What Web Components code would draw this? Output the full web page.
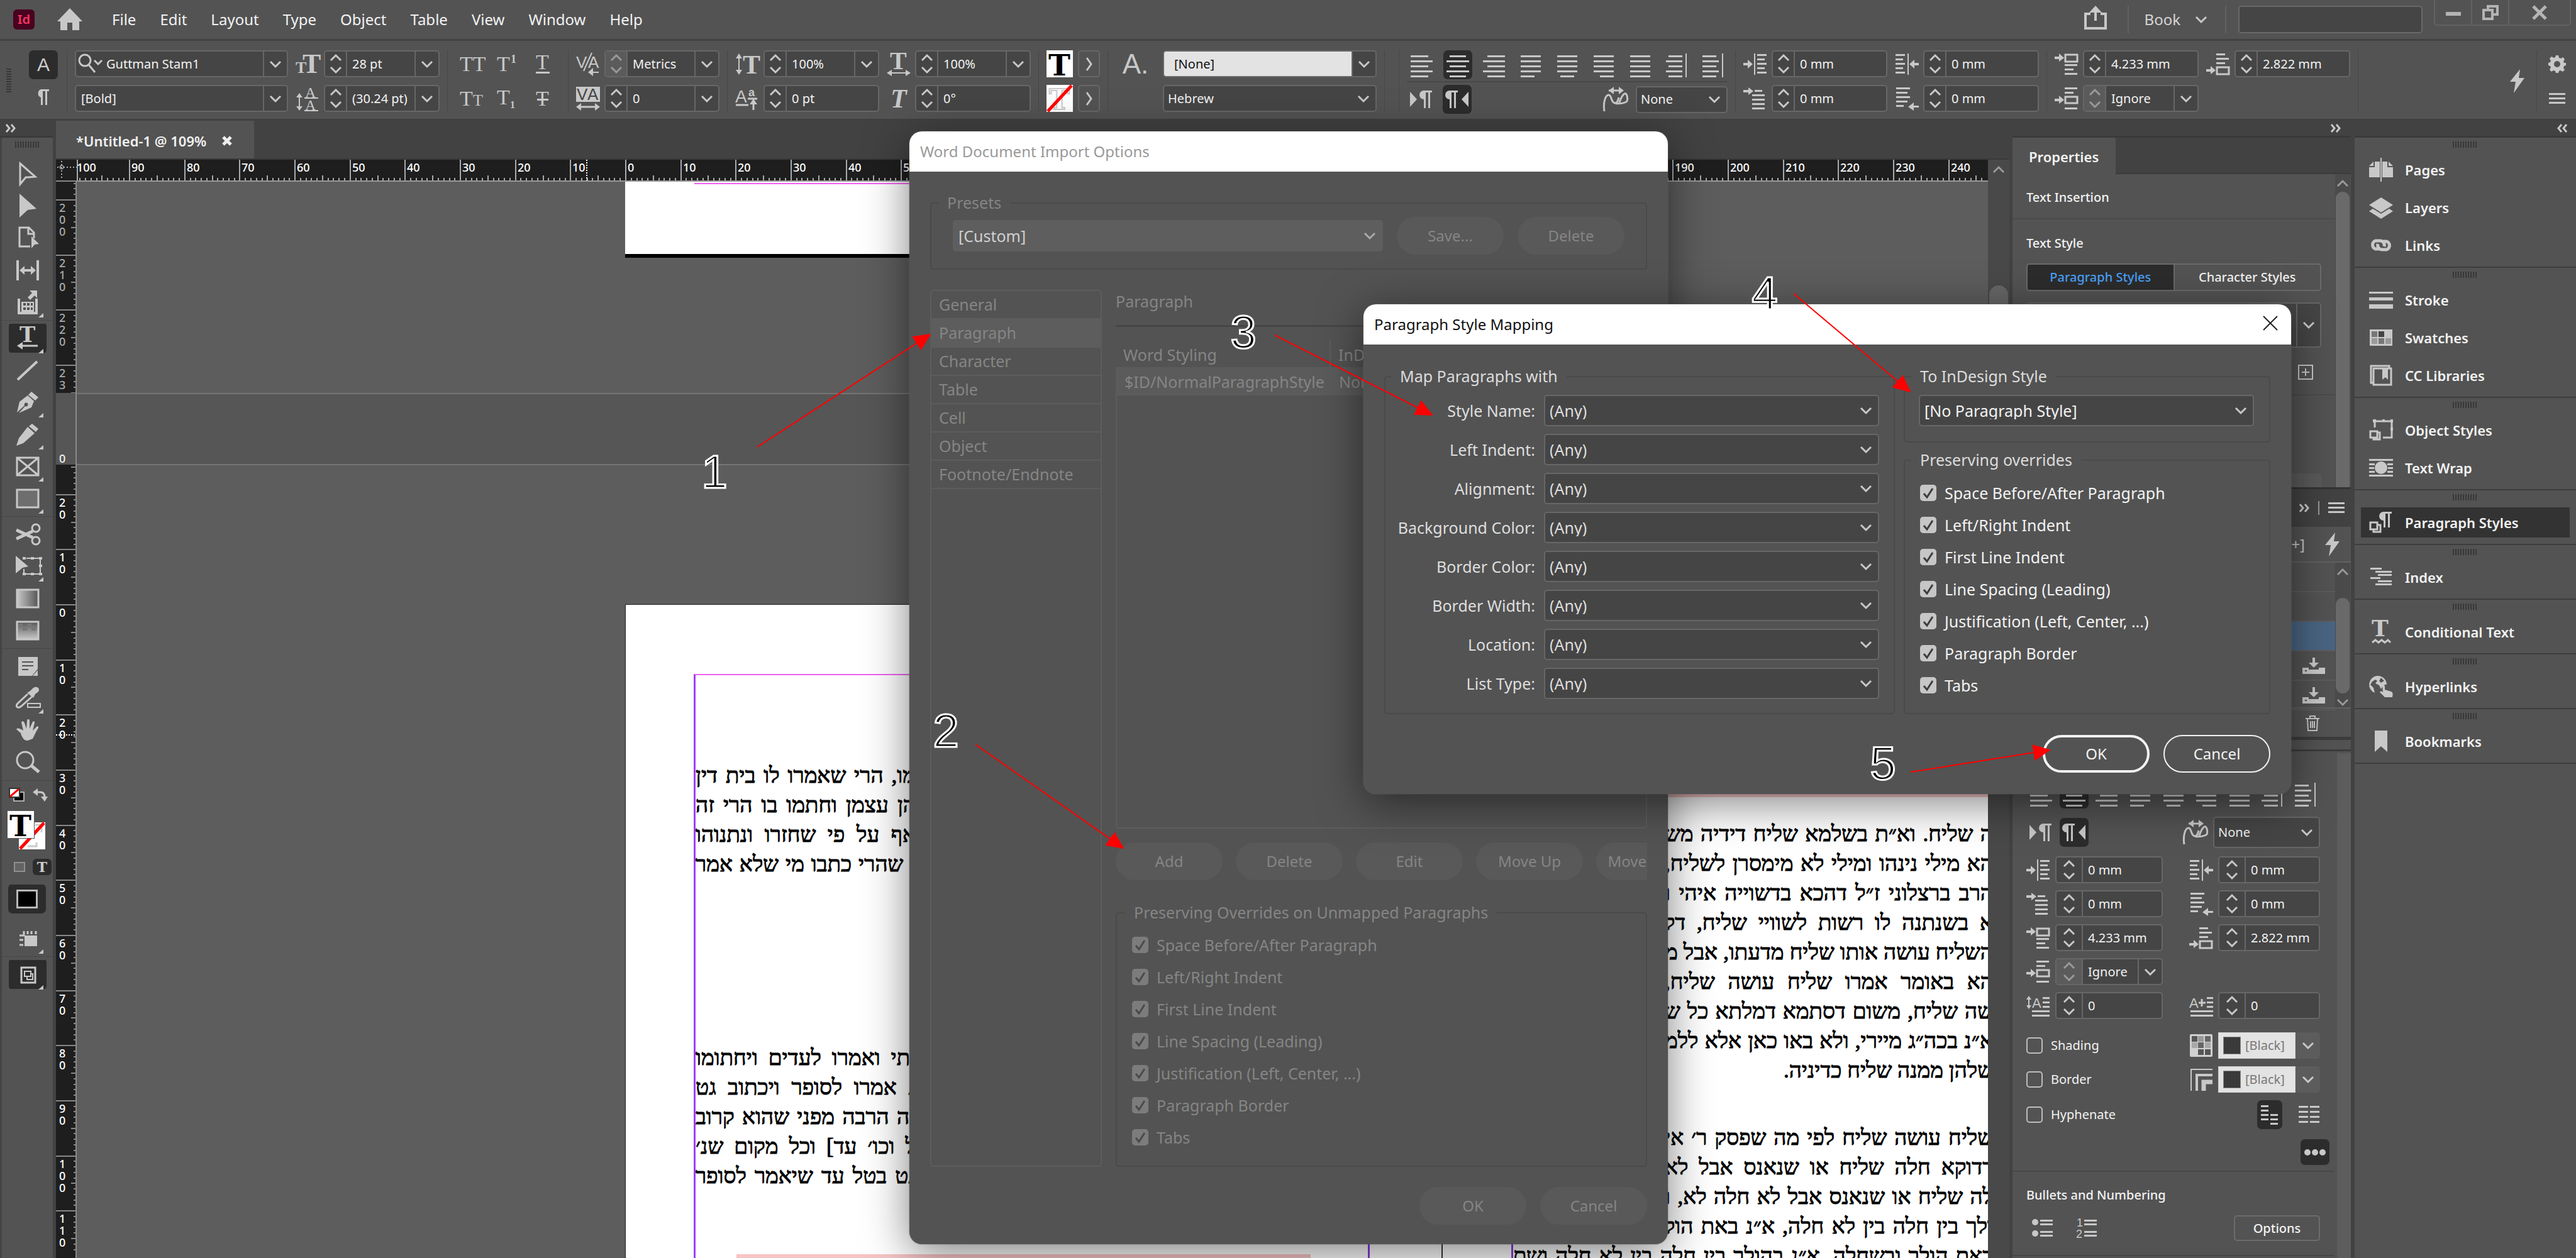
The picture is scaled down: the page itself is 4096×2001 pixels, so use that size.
<!DOCTYPE html>
<html lang="en">
<head>
<meta charset="utf-8">
<title>Layout workspace</title>
<style>
html,body{height:100%;margin:0}
body{background:#424242;overflow:hidden;font-family:"Noto Sans","Open Sans",sans-serif;font-size:20px;line-height:28px;color:#f2f2f2}
</style>
</head>
<body>
<id-app></id-app>
<script>
const chev = 'fill="none" stroke="currentColor" stroke-width="3"';
const bars = (rows, y0 = 3, step = 8) => rows.map((r, i) => `<rect x="${r[0]}" y="${y0 + i * step}" width="${r[1]}" height="3"/>`).join('');
const serif = 'font-family="Liberation Serif" ';
const corner = '<path d="M55 42v7h-8z"/>';
const ICONS = {
  down: [20, 12, `<path d="M2 2l8 8 8-8" ${chev}/>`],
  up: [20, 12, `<path d="M2 10l8-8 8 8" ${chev}/>`],
  right: [12, 28, `<path d="M2 4l7 10-7 10" ${chev}/>`],
  home: [42, 36, '<path d="M21 0L1 21h5v14h11V23h8v12h11V21h5z"/>'],
  share: [38, 40, `<path d="M11 13H3v23h32V13h-8M19 24V6" fill="none" stroke="currentColor" stroke-width="4"/><path d="M19 0l10 11H9z"/>`],
  min: [26, 26, '<rect x="1" y="12" width="24" height="6"/>'],
  restore: [30, 26, '<path d="M11 8V3h15v13h-7M4 9h14v14H4z" fill="none" stroke="currentColor" stroke-width="4"/>'],
  close: [26, 24, '<path d="M3 2l20 20M23 2L3 22" fill="none" stroke="currentColor" stroke-width="5"/>'],
  x: [26, 26, '<path d="M2 2l22 22M24 2L2 24" fill="none" stroke="currentColor" stroke-width="2"/>'],
  xs: [16, 16, '<path d="M2 2l12 12M14 2L2 14" fill="none" stroke="currentColor" stroke-width="5"/>'],
  search: [42, 36, `<circle cx="12" cy="12" r="9" fill="none" stroke="currentColor" stroke-width="3"/><path d="M18 19l10 12M27 12l6 6 6-6" ${chev}/>`],
  pil: [24, 26, '<path d="M21 0v3h-3v22h-3V3h-4v22H8V13a7 7 0 010-13z"/>'],
  ltr: [38, 32, '<path d="M1 4l11 12L1 28z"/><path d="M36 2v3h-3v25h-3V5h-4v25h-3V16a7 7 0 010-14z"/>'],
  rtl: [38, 32, '<path d="M37 4L26 16l11 12z"/><path d="M20 2v3h-3v25h-3V5h-4v25H7V16A7 7 0 017 2z"/>'],
  size: [38, 36, `<text x="0" y="32" font-weight="700" ${serif}font-size="26">T</text><text x="11" y="32" font-weight="700" ${serif}font-size="44">T</text>`],
  lead: [38, 38, `<text x="15" y="17" ${serif}font-size="24">A</text><text x="15" y="37" ${serif}font-size="24">A</text><path d="M14 18h22M14 38h22M6 14v20" fill="none" stroke="currentColor" stroke-width="2"/><path d="M6 10l5 7H1zM6 38l5-7H1z"/>`],
  caps: [44, 28, `<text x="1" y="25" ${serif}font-size="34">TT</text>`],
  small: [44, 28, `<text x="1" y="25" ${serif}font-size="34">T</text><text x="22" y="25" ${serif}font-size="26">T</text>`],
  sup: [36, 28, `<text x="1" y="25" ${serif}font-size="34">T</text><text x="23" y="12" ${serif}font-weight="700" font-size="18">1</text>`],
  sub: [36, 30, `<text x="1" y="24" ${serif}font-size="34">T</text><text x="22" y="30" ${serif}font-weight="700" font-size="16">1</text>`],
  under: [26, 32, `<text x="2" y="24" ${serif}font-size="34">T</text><rect x="2" y="28" width="22" height="3"/>`],
  strike: [26, 28, `<text x="2" y="25" ${serif}font-size="34">T</text><rect x="4" y="14" width="18" height="3"/>`],
  kern: [38, 38, `<text x="0" y="25" font-family="Liberation Sans" font-size="26">V</text><text x="19" y="25" font-family="Liberation Sans" font-size="26">A</text><path d="M12 30L25 1M24 32h12" fill="none" stroke="currentColor" stroke-width="2"/><path d="M27 25v13l-8-6z"/>`],
  track: [38, 38, `<rect width="38" height="24"/><text x="1" y="21" fill="#454545" font-family="Liberation Sans" font-size="26">V</text><text x="18" y="21" fill="#454545" font-family="Liberation Sans" font-size="26">A</text><path d="M5 32h28" stroke="currentColor" stroke-width="3"/><path d="M0 32l8-6v12zM38 32l-8-6v12z"/>`],
  vscale: [38, 34, `<path d="M6 6v22" stroke="currentColor" stroke-width="2"/><path d="M6 0l5 8H1zM6 34l5-8H1z"/><text x="12" y="32" ${serif}font-weight="700" font-size="42">T</text>`],
  hscale: [38, 38, `<text x="5" y="27" ${serif}font-weight="700" font-size="40">T</text><path d="M6 33h26" stroke="currentColor" stroke-width="2"/><path d="M0 33l8-5v10zM38 33l-8-5v10z"/>`],
  base: [38, 36, `<text x="0" y="24" font-family="Liberation Sans" font-size="28">A</text><text x="21" y="14" font-family="Liberation Sans" font-weight="700" font-size="18">a</text><path d="M1 28h20M20 18h15M29 24v12" stroke="currentColor" stroke-width="3"/><path d="M29 18l6 9H23z"/>`],
  skew: [38, 34, `<text x="6" y="31" ${serif}font-style="italic" font-weight="700" font-size="42">T</text>`],
  swT: [42, 43, `<rect width="42" height="43" fill="#fff"/><text x="3" y="40" fill="#000" font-family="DejaVu Serif" font-weight="700" font-size="47">T</text>`],
  swN: [42, 43, `<rect width="42" height="43" fill="#fff"/><text x="4" y="39" fill="#fff" stroke="#ccc" stroke-width="2" font-family="DejaVu Serif" font-weight="700" font-size="44">T</text><path d="M2 42L40 1" stroke="#f00" stroke-width="5"/>`],
  swE: [42, 43, `<rect width="42" height="43" fill="#fff"/><path d="M26 4h10v12M14 38h14v-6" fill="none" stroke="#ccc" stroke-width="3"/><path d="M2 42L40 1" stroke="#f00" stroke-width="5"/>`],
  al0: [38, 36, bars([[2,28],[2,35],[2,28],[2,35],[2,28]])],
  al1: [38, 36, bars([[6,26],[1,36],[6,26],[1,36],[6,26]])],
  al2: [38, 36, bars([[8,28],[1,35],[8,28],[1,35],[8,28]])],
  al3: [38, 36, bars([[3,32],[3,32],[3,32],[3,32],[3,22]])],
  al4: [38, 36, bars([[3,32],[3,32],[3,32],[3,32],[8,22]])],
  al5: [38, 36, bars([[3,32],[3,32],[3,32],[3,32],[13,22]])],
  al6: [38, 36, bars([[3,32],[3,32],[3,32],[3,32],[3,32]])],
  al7: [38, 36, bars([[6,22],[2,26],[6,22],[2,26],[6,22]]) + '<rect x="33" width="2" height="38"/>'],
  al8: [38, 36, bars([[2,22],[2,26],[2,22],[2,26],[2,22]]) + '<rect x="33" width="2" height="38"/>'],
  kash: [42, 40, '<path d="M3 39C1 27 4 13 10 13c5 0 3 12 10 13 4 0 5-5 6-9M20 26c5 2 16 0 19-3 2-6-1-14-4-12s-6 8-8 14M10 6h20" fill="none" stroke="currentColor" stroke-width="3"/><path d="M10 6l8-6v12zM34 6l-8-6v12z"/>'],
  inL: [38, 34, '<path d="M0 15h7v-5l8 7-8 7v-5H0z"/><rect x="17" width="2" height="34"/>' + bars([[22,15],[22,12],[22,15],[22,12],[22,15]], 1, 7)],
  inR: [38, 34, '<path d="M38 15h-7v-5l-8 7 8 7v-5h7z"/><rect x="20" width="2" height="34"/>' + bars([[1,15],[1,12],[1,15],[1,12],[1,15]], 1, 7)],
  inF: [38, 36, '<path d="M0 4h8V0l8 6-8 6V8H0z"/>' + bars([[18,12],[14,20],[14,20],[14,20],[14,20]], 4, 7)],
  inLast: [38, 36, bars([[2,22],[2,18],[2,22],[2,18],[2,12]], 0, 7) + '<path d="M38 29h-8v-5l-9 7 9 6v-5h8z"/>'],
  spB: [38, 34, '<path d="M0 5h7V0l8 7-8 6V9H0z"/><rect x="17" y="2" width="19" height="11" fill="none" stroke="currentColor" stroke-width="3"/>' + bars([[16,20],[16,14],[16,20]], 17, 7)],
  spA: [38, 34, '<path d="M0 25h7v-5l8 7-8 6v-4H0z"/><rect x="17" y="22" width="19" height="11" fill="none" stroke="currentColor" stroke-width="3"/>' + bars([[16,14],[16,20],[16,14]], 0, 7)],
  spM: [38, 36, '<path d="M0 18h7v-5l8 7-8 6v-4H0z"/><rect x="17" y="15" width="19" height="10" fill="none" stroke="currentColor" stroke-width="3"/>' + bars([[16,20],[16,14]], 0, 7) + '<rect x="16" y="32" width="20" height="3"/>'],
  dropH: [38, 32, `<path d="M4 2v17" stroke="currentColor" stroke-width="2"/><path d="M4 0l4 6H0zM4 21l4-6H0z"/><text x="9" y="19" font-family="Liberation Sans" font-size="22">A</text>${bars([[26,11],[26,11],[26,11]],2,7)}${bars([[9,28],[9,28]],23,7)}`],
  dropC: [38, 32, `<text x="0" y="19" font-family="Liberation Sans" font-size="22">A</text><path d="M15 11h11M20 5v12" stroke="currentColor" stroke-width="3"/>${bars([[28,10],[28,10],[28,10]],2,7)}${bars([[2,36],[2,36]],23,7)}`],
  grid: [36, 36, '<rect width="36" height="36" rx="2" fill="#d0d0d0"/><path d="M3 3h9v9H3z" fill="#555"/><path d="M13 3h9v9h-9z" fill="#999"/><path d="M24 3h9v9h-9zM13 13h9v9h-9z" fill="#666"/><path d="M3 13h9v9H3zM24 13h9v9h-9z" fill="#a8a8a8"/><path d="M13 24h9v9h-9zM24 24h9v9h-9z" fill="#555"/>'],
  bord: [36, 36, '<path d="M2 36V2h34" fill="none" stroke="currentColor" stroke-width="2"/><path d="M11 36V11h25" fill="none" stroke="currentColor" stroke-width="4"/><path d="M22 36V22h14" fill="none" stroke="currentColor" stroke-width="7"/>'],
  bolt: [26, 38, '<path d="M18 0L2 20h9L8 38l17-24h-9z"/>'],
  gear: [28, 28, '<path fill-rule="evenodd" d="M12 0h4l1 4 3 1 3-2 3 3-2 4 1 2 3 0v4l-3 1-1 3 2 3-3 3-4-2-2 1-1 3h-4l-1-3-3-1-3 2-3-3 2-4-1-2-3-1v-4l3-1 1-2-2-4 3-3 4 2 2-1zM14 9a5 5 0 100 10 5 5 0 000-10z"/>'],
  menu: [26, 20, bars([[0,26],[0,26],[0,26]], 1, 7)],
  dmore: [16, 14, '<path d="M1 1l5 6-5 6M9 1l5 6-5 6" fill="none" stroke="currentColor" stroke-width="3"/>'],
  dless: [16, 14, '<path d="M7 1L2 7l5 6M15 1l-5 6 5 6" fill="none" stroke="currentColor" stroke-width="3"/>'],
  grip: [42, 10, Array.from({length:10},(_,i)=>`<rect x="${i*4+1}" width="2" height="10" fill="#383838"/>`).join('')],
  vgrip: [8, 42, Array.from({length:10},(_,i)=>`<rect y="${i*4+1}" width="8" height="2" fill="#383838"/>`).join('')],
  t_sel: [60, 50, '<path d="M18 8l24 21-11 1-4 0-9 11z" fill="none" stroke="currentColor" stroke-width="3"/>'],
  t_dir: [60, 50, '<path d="M17 5l27 24-14 2-13 12z"/>'],
  t_page: [60, 50, '<path d="M34 38H17V8h15l8 8v9M31 8v10h10" fill="none" stroke="currentColor" stroke-width="3"/><path d="M36 22l12 12-7 1-5 6z"/>'],
  t_gap: [60, 50, '<path d="M12 9h4v32h-4zM44 9h4v32h-4zM17 25l8-7v5h10v-5l8 7-8 7v-5H25v5z"/>'],
  t_cont: [60, 50, '<path d="M16 19v23h28V19" fill="none" stroke="currentColor" stroke-width="4"/><path fill-rule="evenodd" d="M20 24h20v16H20zM23 26v4h4v-4zM29 26v4h4v-4zM35 26v4h3v-4zM23 33v4h4v-4zM29 33v4h4v-4zM35 33v4h3v-4z"/><path d="M33 6h12v12l-4-4-7 7-4-4 7-7z"/>' + corner],
  t_type: [60, 50, `<text x="17" y="31" font-family="DejaVu Serif" font-weight="700" font-size="34">T</text><path d="M46 37H20" stroke="currentColor" stroke-width="3"/><path d="M22 31v12l-9-6z"/>` + corner],
  t_line: [60, 50, '<path d="M14 40L45 11" stroke="currentColor" stroke-width="4"/>'],
  t_pen: [60, 50, '<path d="M36 8l11 9-5 5-11-9zM30 14l10 9-4 10-20 9 10-11a3 3 0 10-1-1L13 41l4-17z"/>' + corner],
  t_pencil: [60, 50, '<path d="M37 8l10 8-4 5-11-9zM30 13l11 10-18 16-11 4 4-12z"/>' + corner],
  t_frame: [60, 50, '<path d="M13 11h34v28H13zM13 11l34 28M47 11L13 39" fill="none" stroke="currentColor" stroke-width="3"/>' + corner],
  t_rect: [60, 50, '<rect x="13" y="11" width="34" height="28" fill="#6e6e6e" stroke="currentColor" stroke-width="3"/>' + corner],
  t_cut: [60, 50, '<path d="M12 18l26 12M12 32l26-12" stroke="currentColor" stroke-width="5"/><circle cx="43" cy="15" r="6" fill="none" stroke="currentColor" stroke-width="3"/><circle cx="43" cy="35" r="6" fill="none" stroke="currentColor" stroke-width="3"/>'],
  t_free: [60, 50, '<path d="M11 8l20 17-9 2-11 9z"/><path d="M28 12h22v25H24v-8" fill="none" stroke="currentColor" stroke-width="2"/><path d="M22 10h5v4h-5zM35 10h5v4h-5zM48 10h5v4h-5zM48 22h5v4h-5zM48 35h5v4h-5zM35 35h5v4h-5zM22 35h5v4h-5z"/>' + corner],
  t_grad: [60, 50, '<defs><linearGradient id="g"><stop stop-color="#c8c8c8"/><stop offset="1" stop-color="#555"/></linearGradient></defs><rect x="13" y="11" width="34" height="28" fill="url(#g)" stroke="currentColor" stroke-width="3"/>'],
  t_feather: [60, 50, '<defs><linearGradient id="g" x2="0" y2="1"><stop stop-color="#555"/><stop offset="1" stop-color="#c8c8c8"/></linearGradient></defs><rect x="13" y="11" width="34" height="28" fill="url(#g)" stroke="currentColor" stroke-width="3"/><path d="M15 14h7v6h-7zM29 14h7v6h-7zM22 20h7v5h-7zM36 20h7v5h-7z" fill="#777"/>'],
  t_note: [60, 50, '<path fill-rule="evenodd" d="M15 10h31v19l-9 11H15zM21 17v2h18v-2zM21 23v2h18v-2zM21 29v2h10v-2z"/><path d="M46 31v9h-8z"/>'],
  t_eye: [60, 50, '<path d="M38 9c4-4 10-2 10 2s-4 5-6 7l-3 6-10-8 5-3z"/><path d="M30 18L14 33c-4 5 0 8 5 5l18-16" fill="none" stroke="currentColor" stroke-width="3"/><rect x="30" y="33" width="20" height="6" fill="none" stroke="currentColor" stroke-width="2"/>' + corner],
  t_hand: [60, 50, '<path d="M20 30l-8-7c2-3 6-1 11 2l-3-13c1-3 4-2 5 1l3 9 1-13c1-3 4-2 4 0l0 13 5-11c2-2 4 0 3 2l-3 12 6-6c2-2 4 0 3 2-4 6-6 11-9 17l-8 3c-5 0-8-3-11-11z"/>'],
  t_zoom: [60, 50, '<circle cx="26" cy="21" r="13" fill="none" stroke="currentColor" stroke-width="3"/><path d="M36 30l12 10" stroke="currentColor" stroke-width="5"/>'],
  t_view: [60, 50, '<rect x="25" y="20" width="20" height="17"/><path d="M17 20h7v-7M17 27h6M17 35h6M30 13v5M36 13v5M43 13v5" fill="none" stroke="currentColor" stroke-width="3"/>' + corner],
  t_screen: [60, 50, '<path d="M20 14h22v24H20z" fill="none" stroke="currentColor" stroke-width="3"/><path d="M25 20h10v8H25zM29 28v5h9v-9h-3" fill="none" stroke="currentColor" stroke-width="2"/>' + corner],
  mini: [26, 26, '<rect x="8" y="8" width="16" height="14" fill="#000" stroke="#b0b0b0" stroke-width="2"/><rect x="1" y="2" width="16" height="14" fill="#fff" stroke="#333" stroke-width="2"/><path d="M2 15L16 3" stroke="#f00" stroke-width="3"/>'],
  swap: [24, 24, '<path d="M6 8h6q7 0 7 8" fill="none" stroke="currentColor" stroke-width="3"/><path d="M8 2v12L0 8zM13 15h11l-5 8z"/>'],
  pages: [38, 38, '<path d="M0 15h9V6h8v25H0zM38 15h-9V6h-8v25h17zM0 13l7-7v7zM38 13l-7-7v7zM18 0h2v38h-2z"/>'],
  layers: [38, 38, '<path d="M19 3l19 12-19 12L0 15zM6 21l13 8 13-8 6 4-19 12L0 25z"/>'],
  links: [42, 22, '<path d="M18 17h-6a7 7 0 010-13h8a7 7 0 016 9M24 5h6a7 7 0 010 13h-8a7 7 0 01-6-9" fill="none" stroke="currentColor" stroke-width="5"/>'],
  stroke: [38, 28, '<path d="M0 1h38v3H0zM0 10h38v5H0zM0 21h38v7H0z"/>'],
  swatches: [36, 26, '<rect width="36" height="26"/><path d="M3 3h9v9H3zM14 14h9v9h-9z" fill="#777"/><path d="M3 14h9v9H3zM25 14h9v9h-9z" fill="#999"/><path d="M14 3h9v9h-9z" fill="#444"/>'],
  cc: [36, 34, '<path d="M5 29H2V2h29v3M6 6h28v26H6z" fill="none" stroke="currentColor" stroke-width="3"/><path d="M20 7h9v17l-4-4-5 4z"/>'],
  obj: [38, 34, '<path d="M9 13V3h27v26H22" fill="none" stroke="currentColor" stroke-width="3"/><path d="M2 19h11v10H2zM13 21h4v11H7v-3" fill="none" stroke="currentColor" stroke-width="3"/><path d="M6 0h5v5H6zM21 0h4v4h-4zM34 0h4v5h-4zM34 13h4v5h-4z"/>'],
  wrap: [38, 28, bars([[0,38],[0,38]],0,25) + bars([[0,9],[0,8],[0,9]],7,6) + bars([[29,9],[30,8],[29,9]],7,6) + '<circle cx="19" cy="14" r="10"/>'],
  pstyle: [38, 36, '<path d="M36 1v3h-3v22h-3V4h-4v22h-3V15a7 7 0 010-14z"/><path d="M2 18h11v11H2zM13 22h5v11H7v-4" fill="none" stroke="currentColor" stroke-width="3"/>'],
  index: [34, 30, bars([[0,18],[8,26],[12,22],[0,16],[12,22],[8,26]], 0, 5)],
  cond: [34, 38, `<text x="2" y="26" font-family="DejaVu Serif" font-weight="700" font-size="36">T</text><path d="M3 36l5-4 5 4 5-4 5 4 5-4 4 4" fill="none" stroke="currentColor" stroke-width="3"/>`],
  hyper: [40, 36, '<path fill-rule="evenodd" d="M14 1a14 14 0 00-4 27l-2-8-5-5 3-5 5-3 3 2-3 4 6 3 3 6 4-7h5A14 14 0 0014 1zM20 4l5 5-5 3-3-3z"/><path d="M22 15c2-1 4 0 4 3v5l10 3c3 1 3 4 2 9H26l-8-8c1-2 3-2 5 0z"/>'],
  book: [24, 36, '<path d="M2 1h20v34l-10-9-10 9z"/>'],
  plus: [26, 26, '<path d="M2 2h22v22H2zM13 7v12M7 13h12" fill="none" stroke="currentColor" stroke-width="2"/>'],
  save: [36, 26, '<path fill-rule="evenodd" d="M0 16h10v3h16v-3h10v10H0zM4 20v2h3v-2z"/><path d="M16 0h4v8h6l-8 8-8-8h6z"/>'],
  trash: [24, 26, '<path d="M1 6h22M8 6V2h8v4M4 7l1 18h14l1-18M9 10v11M12 10v11M15 10v11" fill="none" stroke="currentColor" stroke-width="2"/>'],
  hyA: [28, 34, bars([[0,12],[0,12],[0,12],[0,12]],2,7) + bars([[15,12],[15,12],[15,12]],16,7)],
  hyB: [34, 30, bars([[0,15],[0,15],[0,15],[0,15]],1,8) + bars([[18,15],[18,15],[18,15],[18,15]],1,8)],
  dots: [34, 12, '<circle cx="5" cy="6" r="5"/><circle cx="17" cy="6" r="5"/><circle cx="29" cy="6" r="5"/>'],
  bul: [34, 30, '<circle cx="5" cy="6" r="5"/><circle cx="5" cy="24" r="5"/>' + bars([[13,20],[13,20]],2,6) + bars([[13,20],[13,20]],20,6)],
  num: [34, 32, `<text x="1" y="13" font-family="Liberation Sans" font-size="18">1</text><text x="0" y="31" font-family="Liberation Sans" font-size="18">2</text>` + bars([[13,20],[13,20]],2,6) + bars([[13,20],[13,20]],20,6)],
  check: [26, 26, '<path d="M6 14l5 6 9-14" fill="none" stroke="currentColor" stroke-width="3"/>'],
};
const icon = (n, cls = '') => `<id-icon name="${n}" class="${cls}"></id-icon>`;
const BASE = `*{box-sizing:border-box}button,input,select{font:inherit;color:inherit;margin:0}button{padding:0;border:0;background:none}
.sel{display:grid;align-items:center}.sel>*{grid-area:1/1}.sel select{appearance:none;outline:0;width:100%;height:100%}.sel id-icon{justify-self:end;pointer-events:none}`;

function define(name, css, html, after) {
  customElements.define(name, class extends HTMLElement {
    connectedCallback() {
      if (this.shadowRoot) return;
      const root = this.attachShadow({ mode: 'open' });
      root.innerHTML = `<style>${BASE}${css}</style>` + (typeof html === 'function' ? html(this) : html);
      if (after) after(this, root);
    }
  });
}

define('id-icon', ':host{display:inline-flex;flex:none;color:#c8c8c8}svg{display:block;overflow:visible}', el => {
  const [w, h, body] = ICONS[el.getAttribute('name')];
  return `<svg width="${w}" height="${h}" viewBox="0 0 ${w} ${h}" fill="currentColor" aria-hidden="true">${body}</svg>`;
});

/* numeric / combo field: spin buttons, value, drop button */
define('id-field', `:host{display:flex;height:43px;border:2px solid #676767;border-radius:5px;background:#454545;overflow:hidden;min-width:0}
.spin{display:flex;flex-direction:column;width:var(--spin,35px);flex:none;border-right:2px solid #676767}
.spin button{flex:1;display:grid;place-items:center}
:host([off]) .spin{background:#5b5b5b}:host([off]) .spin id-icon{color:#999}
input{flex:1;min-width:0;width:0;border:0;background:none;outline:0;padding:0 0 0 8px}
.drop{flex:none;width:38px;border-left:2px solid #676767;display:grid;place-items:center}
:host([light]) input{background:#e3e3e3;color:#111;padding-left:16px}.lead{align-self:center;margin-left:2px}:host([lead]) input{padding-left:4px}`,
  el => {
    const a = n => el.getAttribute(n), h = n => el.hasAttribute(n);
    return (h('spin') ? `<div class="spin"><button aria-label="Increase">${icon('up')}</button><button aria-label="Decrease">${icon('down')}</button></div>` : '')
      + (h('lead') ? icon('search', 'lead') : '')
      + `<input aria-label="${a('label')}" value="${a('value') || ''}">`
      + (h('drop') ? `<button class="drop" aria-label="Show ${a('label')} list">${icon('down')}</button>` : '');
  });

define('id-select', `:host{display:block;height:43px}.sel{height:100%}select{background:#454545;border:2px solid #676767;border-radius:5px;padding:0 40px 0 6px}id-icon{margin-right:11px}
:host([big]){font-size:25px;height:50px}:host([big]) select{padding-left:7px}
:host([off]) select{background:#5e5e5e;border-color:#5e5e5e;color:#d0d0d0;opacity:1}:host([off]) id-icon{color:#aaa}`,
  el => `<div class="sel"><select aria-label="${el.getAttribute('label')}" ${el.hasAttribute('off') ? 'disabled' : ''}><option>${el.getAttribute('value')}</option></select>${icon('down')}</div>`);

define('id-check', `:host{display:flex;align-items:center;height:51px;font-size:25px}label{display:flex;align-items:center;gap:13px;white-space:nowrap}
.box{display:grid}.box>*{grid-area:1/1}input{appearance:none;width:26px;height:26px;border-radius:5px;background:#c6c6c6}id-icon{color:#3c3c3c;pointer-events:none}
:host([off]){color:#858585}:host([off]) input{background:#7c7c7c}:host([off]) id-icon{color:#4a4a4a}
:host([small]){font-size:20px}:host([small]) input{background:none;border:2px solid #bdbdbd}`,
  el => `<label><span class="box"><input type="checkbox" ${el.hasAttribute('small') ? '' : 'checked'} ${el.hasAttribute('off') ? 'disabled' : ''}>${el.hasAttribute('small') ? '' : icon('check')}</span><slot></slot></label>`);

define('id-pill', `:host{display:block;flex:none;width:170px;height:60px}button{width:100%;height:100%;border-radius:30px;border:2px solid #f2f2f2;font-size:24px;white-space:nowrap}
:host([primary]) button{border-width:4px}:host([off]) button{border-color:#595959;background:#595959;color:#858585}`,
  el => `<button ${el.hasAttribute('off') ? 'disabled' : ''}><slot></slot></button>`);

define('id-group', `:host{display:block}fieldset{margin:0;min-width:0;border:2px solid #4a4a4a;border-radius:5px;padding:var(--pad)}
legend{height:30px;line-height:28px;font-size:25px;padding:0 14px;margin-left:var(--lm,11px);color:#dcdcdc}:host([off]) legend{color:#858585}`,
  el => `<fieldset><legend>${el.getAttribute('title-text')}</legend><slot></slot></fieldset>`);

define('id-window', `:host{display:flex;flex-direction:column;position:absolute;border-radius:20px;background:#535353;overflow:hidden;box-shadow:0 14px 70px rgba(0,0,0,.5),0 0 2px #888}
header{height:64px;flex:none;background:#fff;color:#111;font-size:24px;display:flex;align-items:center;justify-content:space-between;padding:0 20px 0 17px}
:host([off]) header{color:#999}header id-icon{color:#222}.body{flex:1;display:flex;flex-direction:column;padding:var(--pad)}`,
  el => `<header><span>${el.getAttribute('title-text')}</span>${el.hasAttribute('off') ? '' : `<button aria-label="Close">${icon('x')}</button>`}</header><div class="body"><slot></slot></div>`);

define('id-menubar', `:host{display:flex;align-items:center;height:65px;flex:none;border-bottom:3px solid #414141;padding:0 8px 0 21px;background:#535353;font-size:24px}
.logo{width:34px;height:32px;border-radius:6px;background:#49021f;color:#ff3366;font-size:20px;font-weight:600;line-height:32px;text-align:center;margin-right:35px}
nav{display:flex;margin-left:27px}nav button{padding:0 19px}.fill{flex:1}.v{width:2px;height:44px;background:#616161}.share{margin-right:32px}
.book{display:flex;align-items:center;gap:23px;margin:0 28px 0 25px;color:#d5d5d5}.srch{width:293px;height:44px;margin:0 18px 0 19px;border:2px solid #696969;border-radius:5px;background:#454545}
.win{display:flex;align-self:flex-start;height:41px;width:218px;border:2px solid #626262;border-top:0;border-radius:0 0 6px 6px}.win button{flex:1;display:grid;place-items:center}.win button+button{border-left:2px solid #626262}.win button:last-child{flex:none;width:98px}.win id-icon{color:#b4b4b4}`,
  `<div class="logo">Id</div>${icon('home')}<nav>${['File','Edit','Layout','Type','Object','Table','View','Window','Help'].map(t => `<button>${t}</button>`).join('')}</nav>
<div class="fill"></div><button class="share" aria-label="Share">${icon('share')}</button><div class="v"></div><button class="book">Book ${icon('down')}</button><div class="v"></div><input class="srch" type="search" aria-label="Search">
<div class="win"><button aria-label="Minimize">${icon('min')}</button><button aria-label="Restore">${icon('restore')}</button><button aria-label="Close">${icon('close')}</button></div>`);

const pair = (ic, attrs, w = 184) => `<div class="pair"><span class="ic">${icon(ic)}</span><id-field ${attrs} style="width:${w}px"></id-field></div>`;
const aligns = Array.from({ length: 9 }, (_, i) => `<button aria-label="Alignment ${i + 1}" class="tg ${i === 1 ? 'on' : ''}">${icon('al' + i)}</button>`).join('');
define('id-controlbar', `:host{display:flex;height:127px;flex:none;border-bottom:3px solid #404040;background:#535353;padding:15px 10px 0 10px;gap:12px}
.col{display:flex;flex-direction:column;gap:12px}.pair{display:flex;gap:8px;height:43px}.ic{width:37px;display:grid;place-items:center}
.sep{width:1px;height:99px;background:#484848}.tg{width:46px;height:46px;border-radius:7px;display:grid;place-items:center}.on{background:#2c2c2c}
.caps{display:grid;grid-template-columns:repeat(3,1fr);width:167px;height:98px;gap:12px 0}.caps button,.c{display:grid;place-items:center}
.lead{display:flex;gap:28px;align-items:center;height:98px;width:84px}.sw{display:flex;gap:8px;height:43px}.sw .go{width:35px;border:2px solid #676767;border-radius:5px;display:grid;place-items:center}
.al{width:510px;display:flex;flex-direction:column}.row{display:flex;justify-content:space-between;align-items:center;height:46px}.line{height:2px;background:#484848;margin:3px 0 4px}
.fill{flex:1}.A{width:63px;height:43px;display:grid;place-items:center;font:44px/43px "Liberation Sans";color:#c8c8c8}`,
  `<div class="lead">${icon('vgrip')}<div class="col" style="gap:6px"><button class="tg on" style="font:30px 'Liberation Sans';color:#ccc">A</button><button class="tg" aria-label="Paragraph controls">${icon('pil')}</button></div></div><i class="sep"></i>
<div class="col" style="width:339px"><id-field lead drop label="Font" value="Guttman Stam1"></id-field><id-field drop label="Font style" value="[Bold]"></id-field></div>
<div class="col">${pair('size', 'spin drop label="Font size" value="28 pt"')}${pair('lead', 'spin drop label="Leading" value="(30.24 pt)"')}</div><i class="sep"></i>
<div class="caps">${['caps','sup','under','small','sub','strike'].map(n => `<button aria-label="${n}">${icon(n)}</button>`).join('')}</div><i class="sep"></i>
<div class="col">${pair('kern', 'spin drop off label="Kerning" value="Metrics"', 183)}${pair('track', 'spin drop label="Tracking" value="0"', 183)}</div><i class="sep"></i>
<div class="col">${pair('vscale', 'spin drop label="Vertical scale" value="100%"')}${pair('base', 'spin label="Baseline shift" value="0 pt"')}</div>
<div class="col">${pair('hscale', 'spin drop label="Horizontal scale" value="100%"')}${pair('skew', 'spin label="Skew" value="0°"')}</div><i class="sep"></i>
<div class="col"><div class="sw">${icon('swT')}<button class="go" aria-label="Fill">${icon('right')}</button></div><div class="sw">${icon('swN')}<button class="go" aria-label="Stroke">${icon('right')}</button></div></div><i class="sep"></i>
<div class="A">A.</div><div class="col" style="width:340px"><id-field light drop label="Character style" value="[None]"></id-field><id-select label="Language" value="Hebrew"></id-select></div><i class="sep"></i><i class="sep" style="margin-left:10px"></i>
<div class="al"><div class="row">${aligns}</div><div class="line"></div><div class="row" style="justify-content:flex-start;gap:11px"><button class="tg" aria-label="Left to right">${icon('ltr')}</button><button class="tg on" aria-label="Right to left">${icon('rtl')}</button><span class="fill"></span>${icon('kash')}<id-select label="Kashidas" value="None" style="width:146px"></id-select></div></div><i class="sep"></i>
<div class="col">${pair('inL', 'spin label="Left indent" value="0 mm"')}${pair('inF', 'spin label="First line indent" value="0 mm"')}</div>
<div class="col">${pair('inR', 'spin label="Right indent" value="0 mm"')}${pair('inLast', 'spin label="Last line indent" value="0 mm"')}</div><i class="sep"></i>
<div class="col">${pair('spB', 'spin label="Space before" value="4.233 mm"')}${pair('spM', 'spin drop off label="Space between" value="Ignore"')}</div>
<div class="col">${pair('spA', 'spin label="Space after" value="2.822 mm"')}</div><i class="sep"></i><div class="fill"></div>
<div class="c" style="height:98px;width:26px;margin-right:6px">${icon('bolt')}</div><i class="sep"></i><div class="col" style="width:40px;align-items:center"><span class="c" style="height:43px">${icon('gear')}</span><span class="c" style="height:43px">${icon('menu')}</span></div>`);

const tool = (n, on) => `<button aria-label="${n.slice(2)} tool" class="${on ? 'on' : ''}">${icon(n)}</button>`;
define('id-toolbox', `:host{display:flex;flex-direction:column;width:84px;flex:none;background:#535353;border-left:3px solid #444}
.head{height:27px;background:#424242;border-bottom:3px solid #3a3a3a;display:flex;align-items:center;padding-left:9px;margin-left:-3px}.g{height:32px;display:grid;justify-content:center;padding-top:6px;align-items:start}
.sec{display:flex;flex-direction:column;align-items:center}.sec+.sec,.last{border-top:1px solid #474747;margin-top:3px;padding-top:2px}.sec button{width:60px;height:51px;display:grid;place-items:center}
.sec .on,.b{background:linear-gradient(#2c2c2c,#2c2c2c) center/60px 46px no-repeat;border-radius:7px}
.small{display:flex;justify-content:space-between;height:44px;padding:8px 8px 0 11px}
.fs{position:relative;height:60px;margin:2px 0 0 9px;width:60px}.fs id-icon{position:absolute}.fs .s{right:0;top:18px}.fs .f{left:0;top:0;outline:1px solid #555}
.fmt{display:flex;gap:6px;margin:16px 0 14px 13px}.fmt button{width:30px;height:26px;display:grid;place-items:center;border-radius:6px}.fmt .k{background:#2c2c2c;font:700 22px/26px "DejaVu Serif";color:#ccc}.sq{width:18px;height:16px;border:2px solid #909090;background:#636363}
.b{width:60px;height:47px;margin-left:10px;display:grid;place-items:center}.blk{width:34px;height:30px;background:#000;border:3px solid #b8b8b8}`,
  `<div class="head">${icon('dmore')}</div><div class="g">${icon('grip')}</div>
<div class="sec">${['t_sel','t_dir','t_page','t_gap','t_cont'].map(n => tool(n)).join('')}</div>
<div class="sec">${tool('t_type', 1)}${['t_line','t_pen','t_pencil','t_frame','t_rect'].map(n => tool(n)).join('')}</div>
<div class="sec">${['t_cut','t_free','t_grad','t_feather'].map(n => tool(n)).join('')}</div>
<div class="sec">${['t_note','t_eye','t_hand','t_zoom'].map(n => tool(n)).join('')}</div>
<div class="last"><div class="small">${icon('mini')}${icon('swap')}</div><div class="fs">${icon('swE', 's')}${icon('swT', 'f')}</div>
<div class="fmt"><button aria-label="Format container"><span class="sq"></span></button><button class="k">T</button></div><button class="b" aria-label="Apply color"><span class="blk"></span></button></div>
<div class="sec" style="border:0;margin-top:14px">${tool('t_view')}</div><div class="sec">${tool('t_screen', 1)}</div>`);

/* ruler: origin = offset of the zero mark, 10 units every PITCH pixels */
const PITCH = 87.65;
define('id-ruler', `:host{display:block;background:#1e1e1e;overflow:hidden;position:relative}svg{display:block}text{font:500 18px "Noto Sans"}`, el => {
  const v = el.hasAttribute('vertical'), o = +el.getAttribute('origin'), from = +el.getAttribute('from'), to = +el.getAttribute('to');
  const base = +(el.getAttribute('base') || 0), ink = el.getAttribute('ink') || '#fff';
  let s = '';
  for (let u = from - 10; u <= to; u++) {
    const p = Math.round(o + u * PITCH / 10), ten = u % 10 === 0, five = u % 5 === 0;
    if (p < 0) { if (!(ten && p > -12)) continue; }
    const len = ten ? 34 : five ? 9 : 5, q = Math.max(p, 0);
    s += v ? `<rect x="${33 - len}" y="${q}" width="${len}" height="2" fill="#888"/>` : `<rect x="${q}" y="${34 - len}" width="2" height="${len}" fill="#aaa"/>`;
    if (ten) {
      const t = String(Math.abs(u + base));
      s += v ? [...t].map((c, i) => `<text x="5" y="${q + 20 + i * 19}" fill="${ink}">${c}</text>`).join('') : `<text x="${p < 0 ? 0 : q + 4}" y="19" fill="${ink}">${t}</text>`;
    }
  }
  const m = el.getAttribute('mark');
  if (m) s += v ? `<path d="M0 ${m}h33" stroke="#fff" stroke-width="2" stroke-dasharray="2 2"/>` : `<path d="M${m} 0v34" stroke="#fff" stroke-width="2" stroke-dasharray="2 2"/>`;
  return `<svg width="${v ? 33 : 4000}" height="${v ? 2000 : 34}">${s}</svg>`;
});

const heb = lines => lines.map(l => `<p class="${l[0] === '|' ? 'end' : ''}">${l.replace('|', '')}</p>`).join('');
define('id-canvas', `:host{display:block;position:relative;flex:1;overflow:hidden;background:#5d5d5d}
.page{position:absolute;background:#fff}.p1{left:872px;top:0;width:1300px;border-bottom:6px solid #000;height:121px;box-sizing:border-box}
.p2{left:872px;right:0;top:672px;bottom:0;border-top:1px solid #222;border-left:1px solid #222}
.band{position:absolute;left:0;right:0;top:336px;height:115px;background:#565656;border:2px solid #757575;border-width:2px 0}
.frame{position:absolute;border:2px solid #f060f0;border-left:3px solid #9b40ff}.fr1{left:982px;top:2px;width:1000px;height:0;border-width:2px 0 0 0;border-top-color:#f060f0}
.fr2{left:981px;top:783px;right:983px;bottom:-9px;border-right:3px solid #8a3ce0}.spine{position:absolute;left:2170px;top:672px;width:2px;bottom:0;background:#333}.m3{position:absolute;left:2281px;top:672px;width:3px;bottom:0;background:#8a3ce0}
.t{position:absolute;direction:rtl;color:#000;font:35px/47px "Liberation Serif",serif;-webkit-text-stroke:1px #000}p{margin:0;height:47px;white-space:nowrap;text-align-last:justify}.end{text-align-last:right}
.a{left:984px;width:350px}.b{right:-8px;width:522px}.c{right:-8px;left:2284px}.pink{position:absolute;background:#f7c4c4}`,
  `<div class="band"></div><div class="page p1"></div><div class="frame fr1"></div><div class="page p2"></div><div class="frame fr2"></div><i class="spine"></i><i class="m3"></i>
<div class="pink" style="left:1049px;width:913px;bottom:0;height:6px"></div><div class="pink" style="right:0;width:600px;top:950px;height:29px"></div>
<div class="t a" style="top:921px">${heb(['מו, הרי שאמרו לו בית דין','הן עצמן וחתמו בו הרי זה','אף על פי שחזרו ונתנוהו',', שהרי כתבו מי שלא אמר'])}</div>
<div class="t a" style="top:1370px">${heb(['ותי ואמרו לעדים ויחתומו','ג אמרו לסופר ויכתוב גט','זה הרבה מפני שהוא קרוב','ל וכו׳ עד] וכל מקום שנ׳','גט בטל עד שיאמר לסופר'])}</div>
<div class="t b" style="top:1014px">${heb(['ה שליח. וא״ת בשלמא שליח דידיה מש','הא מילי נינהו ומילי לא מימסרן לשליח,','הרב ברצלוני ז״ל דהכא בדשוייה איהי ו','א בשנתנה לו רשות לשוויי שליח, דל','השליח עושה אותו שליח מדעתו, אבל מ','הא באומר אמרו שליח עושה שליח,','שה שליח, משום דסתמא דמלתא כל ש','א״נ בכה״ג מיירי, ולא באו כאן אלא ללמ','|שלהן ממנה שליח כדיניה.'])}</div>
<div class="t b" style="top:1497px">${heb(['שליח עושה שליח לפי מה שפסק ר׳ אי','דדוקא חלה שליח או שנאנס אבל לא','לה שליח או שנאנס אבל לא חלה לא, ו','ולך בין חלה בין לא חלה, א״נ באת הול'])}</div>
<div class="t c" style="top:1685px">${heb(['באת הולך ובשחלה, א״נ בהולך בין חלה בין לא חלה ושת'])}</div>`);

define('id-document', `:host{display:flex;flex-direction:column;flex:1;min-width:0;background:#424242}
.tabs{height:62px;flex:none;display:flex;border-bottom:2px solid #3a3a3a}.tab{background:#535353;width:315px;display:flex;align-items:center;gap:25px;padding:4px 0 0 32px;font-weight:600;font-size:22px;white-space:nowrap}.tab id-icon{color:#eee}
.top{display:flex;height:35px;flex:none}.corner{width:33px;background:#1e1e1e;border-bottom:2px solid #888}.top id-ruler{flex:1;border-bottom:2px solid #999}
.main{display:flex;flex:1;min-height:0}.left{display:flex;flex-direction:column;width:33px;border-right:2px solid #8a8a8a;background:#565656}.zero{height:114px;display:flex;align-items:flex-end;padding-left:5px;font-size:18px;line-height:20px;font-weight:500}
.doc{display:flex;flex:1;min-height:0}.l{flex:1;display:flex;flex-direction:column;min-width:0}.bar{width:34px;background:#494949;display:flex;flex-direction:column;align-items:center;padding-top:10px}.bar id-icon{color:#999}.thumb{width:30px;height:250px;border-radius:15px;background:#676767;margin-top:178px}`,
  `<div class="tabs"><div class="tab"><span>*Untitled-1 @ 109%</span>${icon('xs')}</div></div><div class="doc"><div class="l"><div class="top"><div class="corner"><svg width="33" height="33"><path d="M9 2v30M2 12h31" stroke="#aaa" stroke-width="2" stroke-dasharray="2 3"/><circle cx="9" cy="12" r="3" fill="none" stroke="#ccc"/></svg></div><id-ruler origin="872" from="-100" to="246" mark="811"></id-ruler></div>
<div class="main"><div class="left"><id-ruler vertical origin="28" from="0" to="36" base="200" ink="#aaa" style="height:336px"></id-ruler><div class="zero">0</div><id-ruler vertical origin="222" from="-20" to="117" mark="430" style="flex:1"></id-ruler></div><id-canvas></id-canvas></div></div><div class="bar">${icon('up')}<div class="thumb"></div></div></div>`);

const pf = (ic, attrs) => `<div class="pf"><span>${icon(ic)}</span><id-field ${attrs}></id-field></div>`;
define('id-properties', `:host{display:flex;flex-direction:column;width:538px;flex:none;background:#535353;margin-left:5px}
.head{height:27px;flex:none;background:#424242;border-bottom:3px solid #3a3a3a;display:flex;align-items:center;justify-content:flex-end;padding-right:16px}
.tabs{height:58px;flex:none;background:#424242;border-bottom:2px solid #3c3c3c}.tab{width:164px;height:58px;background:#535353;padding:0 0 0 26px;line-height:60px;font-weight:600;font-size:22px}
.p1{height:498px;flex:none;display:flex}.c{flex:1;display:flex;flex-direction:column}.bar{width:24px;margin-right:1px;background:#4b4b4b;display:flex;flex-direction:column;align-items:center;padding-top:9px;gap:7px}.bar id-icon{color:#999}.thumb{width:22px;flex:1;border-radius:11px 11px 0 0;background:#6a6a6a}
.ins{height:72px;border-bottom:2px solid #4a4a4a;line-height:74px;padding-left:22px;font-weight:500}.sty{padding:24px 22px 0;display:flex;flex-direction:column;gap:18px;border-bottom:2px solid #4a4a4a;height:281px;font-weight:500}
.seg{display:flex;height:44px;border:2px solid #6a6a6a;border-radius:5px;overflow:hidden}.seg button{flex:1;font-weight:500}.seg button:first-child{background:#2c2c2c;color:#4aa0f8;border-right:2px solid #6a6a6a}.add{display:flex;justify-content:flex-end;padding:8px 12px 0 0}
.stub{margin:124px 22px 0;height:22px;background:#5a5a5a;border-radius:5px 5px 0 0}
.p2{height:423px;flex:none;border-top:3px solid #333}.ph{height:60px;background:#424242;display:flex;align-items:center;justify-content:flex-end;gap:14px;padding-right:10px}.ph i{width:2px;height:22px;background:#999}
.r2{height:57px;display:flex;align-items:center;justify-content:flex-end;gap:30px;padding-right:17px;border-bottom:2px solid #616161;font-size:24px;color:#c8c8c8}
.list{display:flex;height:232px;border-bottom:2px solid #616161}.rows{flex:1}.rows div{height:47px;border-bottom:2px solid #5c5c5c;display:flex;align-items:center;justify-content:flex-end;padding-right:16px}.rows .s{background:#4a6583}.list .thumb{flex:none;height:152px;border-radius:11px;margin:28px 0 1px}
.r3{height:50px;display:flex;align-items:center;justify-content:flex-end;padding-right:49px;border-bottom:5px solid #3c3c3c}.gapbar{height:18px;border-bottom:3px solid #3c3c3c}
.p3{flex:1;min-height:0;display:flex;overflow:hidden}.k{flex:1;display:flex;flex-direction:column;padding-top:42px}.k>.row,.k>.g{margin-left:22px;margin-right:23px}.row{display:flex;align-items:center;justify-content:space-between}
.tg{width:46px;height:46px;border-radius:7px;display:grid;place-items:center;flex:none}.on{background:#2c2c2c}.g{display:grid;grid-template-columns:217px 1fr;gap:11px 42px;margin-top:13px}
.pf{display:flex;gap:9px}.pf>span{width:37px;display:grid;place-items:center}.pf id-field{flex:1;--spin:42px}.blk{display:flex;height:42px;width:162px;flex:none}.blk span{flex:1;background:#e3e3e3;border:1px solid #ccc;color:#777;display:flex;align-items:center;gap:8px;padding-left:8px;line-height:40px}.blk i{width:26px;height:26px;background:#3a3a3a;outline:1px solid #888}.blk button{width:39px;background:#5c5c5c;display:grid;place-items:center;border-radius:0 5px 5px 0}
.sr{display:flex;gap:9px;align-items:center}.hy{gap:26px}.hy .tg{width:40px}.opt{width:137px;height:41px;border:2px solid #6c6c6c;border-radius:5px;font-weight:500}.k hr{border:0;height:2px;background:#474747;margin:9px 0 0;width:100%}.sb{width:22px;background:#5d5d5d;margin-left:4px}`,
  `<div class="head">${icon('dmore')}</div><div class="tabs"><div class="tab">Properties</div></div>
<div class="p1"><div class="c"><div class="ins">Text Insertion</div><div class="sty"><div>Text Style</div><div class="seg"><button>Paragraph Styles</button><button>Character Styles</button></div><id-field drop label="Paragraph style" style="height:72px"></id-field><div class="add">${icon('plus')}</div></div><div class="stub"></div></div><div class="bar">${icon('up')}<div class="thumb"></div></div></div>
<div class="p2"><div class="ph">${icon('dmore')}<i></i>${icon('menu')}</div><div class="r2"><span>[a+]</span>${icon('bolt')}</div><div class="list"><div class="rows"><div></div><div></div><div class="s"></div><div>${icon('save')}</div><div>${icon('save')}</div></div><div class="bar">${icon('up')}<div class="thumb"></div>${icon('down')}</div></div><div class="r3">${icon('trash')}</div><div class="gapbar"></div></div>
<div class="p3"><div class="k"><div class="row">${aligns}</div>
<div class="row" style="margin-top:13px;height:50px;gap:7px"><button class="tg" aria-label="Left to right">${icon('ltr')}</button><button class="tg on" aria-label="Right to left">${icon('rtl')}</button><span style="flex:1"></span>${icon('kash')}<id-select label="Kashidas" value="None" style="width:170px;height:50px"></id-select></div>
<div class="g">${pf('inL','spin label="Left indent" value="0 mm"')}${pf('inR','spin label="Right indent" value="0 mm"')}${pf('inF','spin label="First line" value="0 mm"')}${pf('inLast','spin label="Last line" value="0 mm"')}${pf('spB','spin label="Space before" value="4.233 mm"')}${pf('spA','spin label="Space after" value="2.822 mm"')}${pf('spM','spin drop off label="Space between" value="Ignore"')}<i></i>${pf('dropH','spin label="Drop cap lines" value="0"')}${pf('dropC','spin label="Drop cap characters" value="0"')}</div>
<div class="row" style="margin-top:21px;height:42px"><id-check small>Shading</id-check><div class="sr">${icon('grid')}<div class="blk"><span><i></i>[Black]</span><button aria-label="Shading color">${icon('down')}</button></div></div></div>
<div class="row" style="margin-top:12px;height:42px"><id-check small>Border</id-check><div class="sr">${icon('bord')}<div class="blk"><span><i></i>[Black]</span><button aria-label="Border color">${icon('down')}</button></div></div></div>
<div class="row" style="margin-top:11px;height:47px"><id-check small>Hyphenate</id-check><div class="sr hy"><button class="tg on" aria-label="Hyphenation">${icon('hyA')}</button>${icon('hyB')}</div></div>
<div class="row" style="justify-content:flex-end;margin:16px 8px 0 0"><button class="tg on" style="height:41px" aria-label="More">${icon('dots')}</button></div><hr>
<div class="row" style="margin-top:23px;font-weight:500">Bullets and Numbering</div><div class="row" style="margin-top:18px;height:41px;padding-left:9px"><span style="display:flex;gap:36px">${icon('bul')}${icon('num')}</span><button class="opt">Options</button></div><hr style="margin-top:22px"></div><div class="sb"></div></div>`);

const DOCK = [[['pages','Pages'],['layers','Layers'],['links','Links']],[['stroke','Stroke'],['swatches','Swatches'],['cc','CC Libraries']],[['obj','Object Styles'],['wrap','Text Wrap']],[['pstyle','Paragraph Styles',1]],[['index','Index']],[['cond','Conditional Text']],[['hyper','Hyperlinks']],[['book','Bookmarks']]];
define('id-dock', `:host{display:flex;flex-direction:column;width:352px;flex:none;background:#535353;margin-left:6px}
.head{height:27px;flex:none;background:#424242;border-bottom:3px solid #3a3a3a;display:flex;align-items:center;justify-content:flex-end;padding-right:14px}
section{border-bottom:2px solid #3d3d3d;padding:0 10px 4px;display:flex;flex-direction:column}.g{height:21px;padding-top:6px;display:grid;justify-content:center}
section button{height:60px;display:flex;align-items:center;gap:16px;padding-left:10px;font-weight:600;font-size:22px;border-radius:6px}section button span{width:44px;display:grid;place-items:center}
.sel-on{background:linear-gradient(#333,#333) center/100% 48px no-repeat}`,
  `<div class="head">${icon('dless')}</div>` + DOCK.map(s => `<section><div class="g">${icon('grip')}</div>${s.map(i => `<button class="${i[2] ? 'sel-on' : ''}"><span>${icon(i[0])}</span>${i[1]}</button>`).join('')}</section>`).join(''));

const OVR = ['Space Before/After Paragraph','Left/Right Indent','First Line Indent','Line Spacing (Leading)','Justification (Left, Center, ...)','Paragraph Border','Tabs'];
define('id-import-options', `:host{display:contents}id-window{left:1446px;top:209px;width:1206px;height:1770px;--pad:35px 33px 31px;color:#858585;font-size:25px}
.pre{--pad:7px 34px 22px;--lm:-23px}.row{display:flex;align-items:center;gap:22px}.cols{flex:1;display:grid;grid-template-columns:273px 1fr;gap:22px;margin:32px 0;min-height:0}
ul{margin:0;padding:0;list-style:none;border:2px solid #5d5d5d;border-radius:5px}li{height:45px;line-height:43px;border-bottom:2px solid #5d5d5d;padding-left:12px}li.on{background:#5d5d5d}
.r{display:flex;flex-direction:column;min-width:0}h2{margin:0;font-size:25px;font-weight:400;line-height:36px}hr{border:0;height:3px;background:#464646;margin:20px 0;width:100%}
table{border-collapse:collapse;table-layout:fixed;width:100%}th{font-weight:400;text-align:left;height:44px;padding:4px 0 0 12px}td{height:45px;background:#5b5b5b;padding:0 0 0 14px;white-space:nowrap}th+th{border-left:2px solid #5d5d5d}
.fill{flex:1;border:2px solid #5d5d5d;border-top:0;border-radius:0 0 5px 5px;margin-bottom:22px}.btns{overflow:hidden;margin-bottom:37px;gap:21px}.ov{--pad:10px 26px 20px 24px;--lm:-11px}.foot{justify-content:flex-end}`,
  `<id-window off title-text="Word Document Import Options">
<id-group off class="pre" title-text="Presets"><div class="row"><id-select big off label="Presets" value="[Custom]" style="flex:1"></id-select><id-pill off>Save...</id-pill><id-pill off>Delete</id-pill></div></id-group>
<div class="cols"><ul>${['General','Paragraph','Character','Table','Cell','Object','Footnote/Endnote'].map((t, i) => `<li class="${i === 1 ? 'on' : ''}">${t}</li>`).join('')}</ul>
<div class="r"><h2>Paragraph</h2><hr><table><colgroup><col style="width:341px"><col></colgroup><tr><th>Word Styling</th><th>InDesign Style</th></tr><tr><td>$ID/NormalParagraphStyle</td><td>Normal</td></tr></table><div class="fill"></div>
<div class="row btns">${['Add','Delete','Edit','Move Up','Move Down'].map(t => `<id-pill off>${t}</id-pill>`).join('')}</div>
<id-group off class="ov" title-text="Preserving Overrides on Unmapped Paragraphs">${OVR.map(t => `<id-check off>${t}</id-check>`).join('')}</id-group></div></div>
<div class="row foot"><id-pill off>OK</id-pill><id-pill off>Cancel</id-pill></div></id-window>`);

define('id-style-mapping', `:host{display:contents}id-window{left:2168px;top:484px;width:1475px;height:779px;--pad:36px 33px 34px;font-size:25px}
.cols{flex:1;display:grid;grid-template-columns:812px 1fr;gap:14px}.map{--pad:14px 23px 22px;--lm:-14px}.rows{display:flex;flex-direction:column;gap:12px}
label{display:grid;grid-template-columns:minmax(0,1fr) 533px;gap:14px;align-items:center;color:#dedede;white-space:nowrap}label span{display:flex;justify-content:flex-end}.to{--pad:14px 24px 24px 22px;--lm:-12px}.ov{--pad:11px 24px 19px;--lm:-14px;margin-top:13px}.foot{display:flex;justify-content:flex-end;gap:22px}`,
  `<id-window title-text="Paragraph Style Mapping"><div class="cols"><id-group class="map" title-text="Map Paragraphs with"><div class="rows">${['Style Name:','Left Indent:','Alignment:','Background Color:','Border Color:','Border Width:','Location:','List Type:'].map(t => `<label><span>${t}</span><id-select big label="${t}" value="(Any)"></id-select></label>`).join('')}</div></id-group>
<div><id-group class="to" title-text="To InDesign Style"><id-select big label="To InDesign Style" value="[No Paragraph Style]"></id-select></id-group><id-group class="ov" title-text="Preserving overrides">${OVR.map(t => `<id-check>${t}</id-check>`).join('')}</id-group></div></div>
<div class="foot"><id-pill primary>OK</id-pill><id-pill>Cancel</id-pill></div></id-window>`);

const CALLS = [['1',1136,776,1204,711,1479,532],['2',1504,1188,1551,1184,1786,1349],['3',1977,554,2027,533,2277,660],['4',2806,492,2852,467,3037,623],['5',2994,1240,3038,1228,3259,1193]];
define('id-callouts', `:host{position:absolute;inset:0;pointer-events:none}svg{width:100%;height:100%;display:block}text{font:74px "Liberation Sans",sans-serif;fill:#000;stroke:#fff;stroke-width:3px;text-anchor:middle}`,
  `<svg><defs><marker id="h" markerUnits="userSpaceOnUse" markerWidth="28" markerHeight="26" refX="26" refY="13" orient="auto"><path d="M0 0l28 13L0 26z" fill="#f00"/></marker></defs>${CALLS.map(c => `<path d="M${c[3]} ${c[4]}L${c[5]} ${c[6]}" stroke="#f00" stroke-width="2" marker-end="url(#h)"/><text x="${c[1]}" y="${c[2]}">${c[0]}</text>`).join('')}</svg>`);

define('id-app', `:host{display:flex;flex-direction:column;height:100vh;position:relative;overflow:hidden}.main{flex:1;min-height:0;display:flex}id-document{margin-left:5px}`,
  `<id-menubar></id-menubar><id-controlbar></id-controlbar><div class="main"><id-toolbox></id-toolbox><id-document></id-document><id-properties></id-properties><id-dock></id-dock></div><id-import-options></id-import-options><id-style-mapping></id-style-mapping><id-callouts></id-callouts>`);
</script>
</body>
</html>
